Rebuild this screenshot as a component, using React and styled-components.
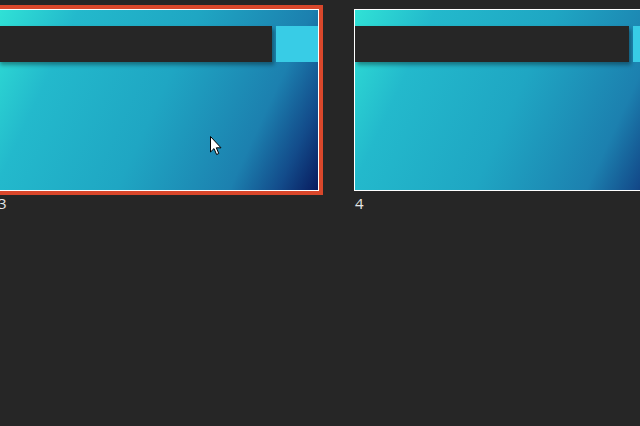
import React from "react";
import styled, { createGlobalStyle } from "styled-components";

const Global = createGlobalStyle`
  html, body { margin: 0; padding: 0; background: #262626; overflow: hidden; }
  body { width: 640px; height: 426px; font-family: "Open Sans", "DejaVu Sans", sans-serif; }
`;

const Page = styled.div`
  position: relative;
  width: 640px;
  height: 426px;
  background: #262626;
  overflow: hidden;
`;

const Strip = styled.div`
  display: flex;
  gap: 27px;
  margin-left: -7px;
  padding-top: 5px;
`;

const Item = styled.div`
  display: flex;
  flex-direction: column;
  flex-shrink: 0;
`;

const Frame = styled.div`
  border: 4px solid ${(p) => (p.$selected ? "#d9472b" : "transparent")};
`;

const Slide = styled.div`
  box-sizing: border-box;
  width: 322px;
  height: 182px;
  border: 1px solid #ffffff;
  overflow: hidden;
  background: linear-gradient(
    115deg,
    #30e2d6 0%,
    #23b9cc 20%,
    #1fa6c3 50%,
    #1c80af 78%,
    #134c8b 90%,
    #081b5e 100%
  );
  padding-top: 16px;
`;

const TitleRow = styled.div`
  display: flex;
  gap: 4px;
  height: 36px;
`;

const TitleBar = styled.div`
  width: 274px;
  flex-shrink: 0;
  background: #262626;
  box-shadow: 2px 3px 4px rgba(0, 0, 0, 0.35);
`;

const Accent = styled.div`
  flex: 1;
  background: #38cce6;
`;

const Label = styled.div`
  padding-left: 5px;
  font-size: 15px;
  line-height: 16px;
  color: #e6e6e6;
`;

const Cursor = styled.svg`
  position: absolute;
  left: 210px;
  top: 136px;
`;

const Thumb = ({ n, selected }) => (
  <Item>
    <Frame $selected={selected}>
      <Slide>
        <TitleRow>
          <TitleBar />
          <Accent />
        </TitleRow>
      </Slide>
    </Frame>
    <Label>{n}</Label>
  </Item>
);

export default function App() {
  return (
    <Page>
      <Global />
      <Strip>
        <Thumb n={3} selected />
        <Thumb n={4} />
      </Strip>
      <Cursor width="13" height="20" viewBox="0 0 13 20">
        <path
          d="M0.5 0.5 L0.5 16 L4 12.6 L6.6 18.5 L8.8 17.5 L6.3 11.8 L11 11.8 Z"
          fill="#ffffff"
          stroke="#000000"
          strokeWidth="1"
          strokeLinejoin="miter"
        />
      </Cursor>
    </Page>
  );
}
